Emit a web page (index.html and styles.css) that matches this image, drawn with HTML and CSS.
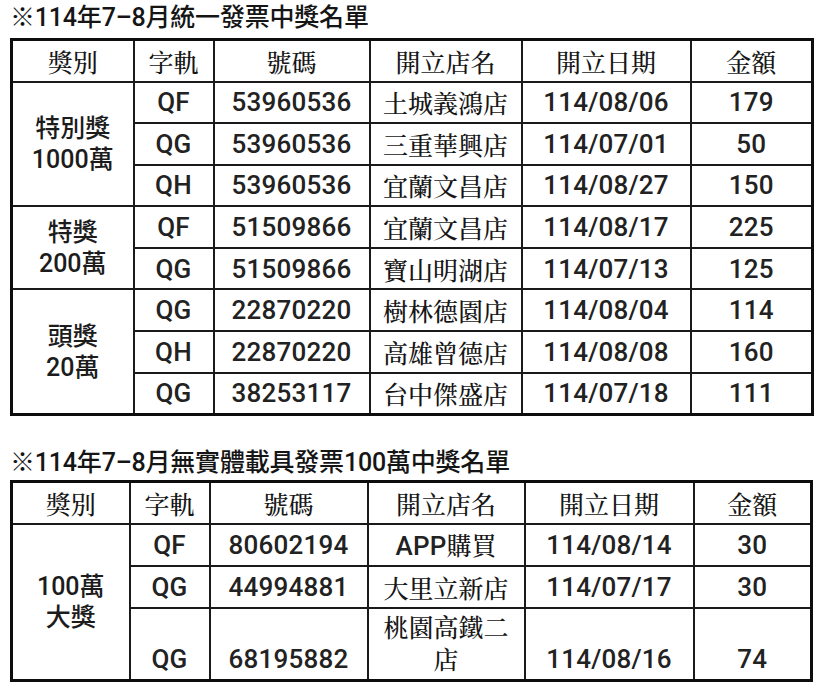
FILE: index.html
```html
<!DOCTYPE html>
<html lang="zh-Hant-TW">
<head>
<meta charset="utf-8">
<title>114年7-8月統一發票中獎名單</title>
<link rel="stylesheet" href="styles.css">
</head>
<body>
<div class="page">
  <h2 class="title">※114年7–8月統一發票中獎名單</h2>
  <table class="list list-a">
    <colgroup>
      <col class="c1"><col class="c2"><col class="c3"><col class="c4"><col class="c5"><col class="c6">
    </colgroup>
    <thead>
      <tr class="head"><th>獎別</th><th>字軌</th><th>號碼</th><th>開立店名</th><th>開立日期</th><th>金額</th></tr>
    </thead>
    <tbody>
      <tr><td class="prize" rowspan="3">特別獎<br>1000萬</td><td class="num">QF</td><td class="num">53960536</td><td class="store">土城義鴻店</td><td class="num">114/08/06</td><td class="num">179</td></tr>
      <tr><td class="num">QG</td><td class="num">53960536</td><td class="store">三重華興店</td><td class="num">114/07/01</td><td class="num">50</td></tr>
      <tr><td class="num">QH</td><td class="num">53960536</td><td class="store">宜蘭文昌店</td><td class="num">114/08/27</td><td class="num">150</td></tr>
      <tr><td class="prize" rowspan="2">特獎<br>200萬</td><td class="num">QF</td><td class="num">51509866</td><td class="store">宜蘭文昌店</td><td class="num">114/08/17</td><td class="num">225</td></tr>
      <tr><td class="num">QG</td><td class="num">51509866</td><td class="store">寶山明湖店</td><td class="num">114/07/13</td><td class="num">125</td></tr>
      <tr><td class="prize" rowspan="3">頭獎<br>20萬</td><td class="num">QG</td><td class="num">22870220</td><td class="store">樹林德園店</td><td class="num">114/08/04</td><td class="num">114</td></tr>
      <tr><td class="num">QH</td><td class="num">22870220</td><td class="store">高雄曾德店</td><td class="num">114/08/08</td><td class="num">160</td></tr>
      <tr><td class="num">QG</td><td class="num">38253117</td><td class="store">台中傑盛店</td><td class="num">114/07/18</td><td class="num">111</td></tr>
    </tbody>
  </table>

  <h2 class="title title-b">※114年7–8月無實體載具發票100萬中獎名單</h2>
  <table class="list list-b">
    <colgroup>
      <col class="c1"><col class="c2"><col class="c3"><col class="c4"><col class="c5"><col class="c6">
    </colgroup>
    <thead>
      <tr class="head"><th>獎別</th><th>字軌</th><th>號碼</th><th>開立店名</th><th>開立日期</th><th>金額</th></tr>
    </thead>
    <tbody>
      <tr><td class="prize" rowspan="3">100萬<br>大獎</td><td class="num">QF</td><td class="num">80602194</td><td class="store"><span class="num">APP</span>購買</td><td class="num">114/08/14</td><td class="num">30</td></tr>
      <tr><td class="num">QG</td><td class="num">44994881</td><td class="store">大里立新店</td><td class="num">114/07/17</td><td class="num">30</td></tr>
      <tr class="tall"><td class="num">QG</td><td class="num">68195882</td><td class="store store-wrap">桃園高鐵二店</td><td class="num">114/08/16</td><td class="num">74</td></tr>
    </tbody>
  </table>
</div>
</body>
</html>
```

FILE: styles.css
```css
html, body {
  margin: 0;
  padding: 0;
  background: #ffffff;
}

.page {
  padding: 3px 0 0 10px;
  color: #1c1c1c;
  font-family: "Noto Sans CJK TC", "Noto Sans", sans-serif;
}

.title {
  margin: 0;
  height: 35px;
  font-family: Roboto, "Noto Sans CJK TC", sans-serif;
  font-size: 25px;
  font-weight: 500;
  line-height: 30px;
  letter-spacing: -0.2px;
  color: #151515;
}

.title-b {
  margin-top: 32px;
  height: 32px;
}

.list {
  border-collapse: collapse;
  table-layout: fixed;
  border: 3px solid #0d0d0d;
}

.list-a { width: 801px; }
.list-b { width: 800px; }

.list-a .c1 { width: 122px; }
.list-a .c2 { width: 80px; }
.list-a .c3 { width: 156px; }
.list-a .c4 { width: 152px; }
.list-a .c5 { width: 169px; }
.list-a .c6 { width: 122px; }

.list-b .c1 { width: 118px; }
.list-b .c2 { width: 80px; }
.list-b .c3 { width: 158px; }
.list-b .c4 { width: 157px; }
.list-b .c5 { width: 169px; }
.list-b .c6 { width: 118px; }

.list th,
.list td {
  border: 2px solid #1a1a1a;
  padding: 0 7px;
  text-align: center;
  vertical-align: middle;
  font-size: 25px;
  line-height: 30px;
}

.list th {
  font-family: "Noto Serif CJK TC", "Noto Sans CJK TC", serif;
  font-weight: 500;
  color: #161616;
}

.list-a tr { height: 41.6px; }
.list-a tr.head { height: 42px; }

.list-b tr { height: 42px; }
.list-b tr.head { height: 43px; }
.list-b tr.tall { height: 72px; }

.list-b tr.tall td {
  vertical-align: bottom;
  padding-bottom: 5px;
}

.list td.prize {
  vertical-align: middle;
  font-family: Roboto, "Noto Sans CJK TC", sans-serif;
  font-weight: 500;
  line-height: 31px;
  padding-bottom: 0;
}

.list td.num,
.list .num {
  font-family: Roboto, "Liberation Sans", sans-serif;
  font-weight: 500;
  font-size: 26px;
  letter-spacing: 0.2px;
  color: #222;
}

.list td.store {
  font-family: "Noto Serif CJK TC", "Noto Sans CJK TC", serif;
  font-weight: 500;
  color: #161616;
}

.list td.store-wrap {
  line-height: 32px;
}
```
